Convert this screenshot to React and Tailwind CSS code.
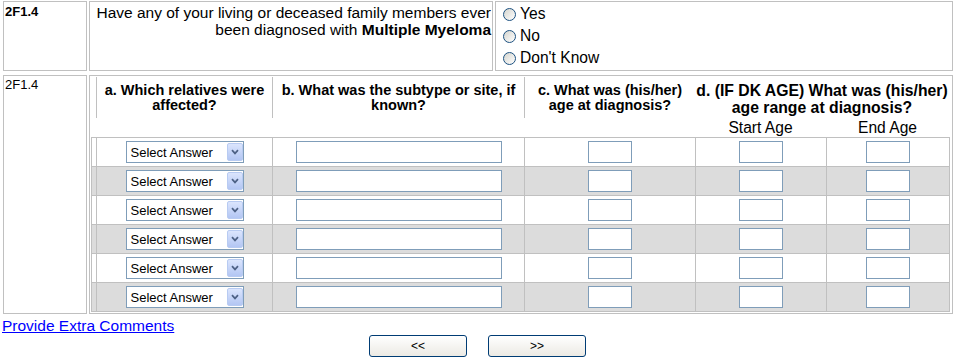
import React from "react"

const ROWS = [0, 1, 2, 3, 4, 5]

function Radio({ label }) {
  return (
    <div className="flex items-center h-[22px]">
      <span className="w-[13px] h-[13px] rounded-full border border-[#1c5180] bg-linear-to-br from-[#d4d4ce] to-white" />
      <span className="ml-[4px] text-[15.6px] leading-[18px]">{label}</span>
    </div>
  )
}

function SelectBox() {
  return (
    <div className="w-[118px] h-[22px] border border-[#7f9db9] bg-white flex items-center pl-[4px]">
      <span className="flex-1 text-[13px] leading-[15px] whitespace-nowrap">Select Answer</span>
      <span className="w-[16px] h-[18px] rounded-[2px] border border-[#b8cbf2] bg-linear-to-b from-[#dbe5fd] to-[#b3c6f3] flex items-center justify-center">
        <svg width="8" height="6" viewBox="0 0 8 6">
          <path d="M1 1.2 L4 4.4 L7 1.2" stroke="#4d6185" strokeWidth="1.7" fill="none" />
        </svg>
      </span>
    </div>
  )
}

function TextBox({ w }) {
  return <input type="text" readOnly className={`${w} h-[22px] border border-[#7f9db9] bg-white outline-none`} />
}

function DataRow({ gray, last }) {
  return (
    <div className={`flex ${last ? "h-[28px]" : "h-[29px] border-b border-[#c0c0c0]"} ${gray ? "bg-[#dcdcdc]" : "bg-white"}`}>
      <div className="w-[4px]" />
      <div className="w-[176px] border-l border-[#c0c0c0] flex items-center justify-center">
        <SelectBox />
      </div>
      <div className="w-[252px] border-l border-[#c0c0c0] flex items-center justify-center">
        <TextBox w="w-[206px]" />
      </div>
      <div className="w-[171px] border-l border-[#c0c0c0] flex items-center justify-center">
        <TextBox w="w-[44px]" />
      </div>
      <div className="w-[131px] border-l border-[#c0c0c0] flex items-center justify-center">
        <TextBox w="w-[44px]" />
      </div>
      <div className="w-[123px] border-l border-[#c0c0c0] flex items-center justify-center">
        <TextBox w="w-[44px]" />
      </div>
    </div>
  )
}

export default function App() {
  return (
    <div className="w-[959px] h-[363px] bg-white text-black font-['Liberation_Sans',Arial,sans-serif] overflow-hidden">
      <div className="pl-[3px] pt-[1px] flex flex-col">

        {/* question row */}
        <div className="flex gap-[2px] h-[70px]">
          <div className="w-[84px] border border-[#c0c0c0] pl-[1px] pt-[2px] text-[13px] leading-[15px] font-bold">2F1.4</div>
          <div className="w-[404px] border border-[#c0c0c0] pt-[2px] pr-[1px] text-right text-[15.5px] leading-[17px] whitespace-nowrap">
            Have any of your living or deceased family members ever<br />
            been diagnosed with <b>Multiple Myeloma</b>
          </div>
          <div className="w-[458px] border border-[#c0c0c0] pt-[1px] pl-[7px]">
            <Radio label="Yes" />
            <Radio label="No" />
            <Radio label="Don't Know" />
          </div>
        </div>

        {/* relatives grid row */}
        <div className="mt-[4px] flex gap-[2px] h-[239px]">
          <div className="w-[84px] border border-[#c0c0c0] pl-[1px] pt-[1px] text-[13px] leading-[15px]">2F1.4</div>
          <div className="w-[864px] border border-[#c0c0c0] flex flex-col">
            <div className="ml-[6px] mt-[1px] h-[60px] flex items-start font-bold">
              <div className="w-[176px] h-[41px] border-l border-[#c0c0c0] pt-[6px] text-center text-[14.5px] leading-[15px]">
                a. Which relatives were<br />affected?
              </div>
              <div className="w-[252px] h-[41px] border-l border-[#c0c0c0] pt-[6px] text-center text-[14.5px] leading-[15px] whitespace-nowrap">
                b. What was the subtype or site, if<br />known?
              </div>
              <div className="w-[171px] h-[41px] border-l border-[#c0c0c0] pt-[6px] text-center text-[14.5px] leading-[15px] whitespace-nowrap">
                c. What was (his/her)<br />age at diagnosis?
              </div>
              <div className="w-[254px] flex flex-col">
                <div className="pt-[5px] text-center text-[15.75px] leading-[17px] whitespace-nowrap">
                  d. (IF DK AGE) What was (his/her)<br />age range at diagnosis?
                </div>
                <div className="flex mt-[3px] text-[15.6px] leading-[18px] font-normal">
                  <div className="w-[131px] text-center">Start Age</div>
                  <div className="w-[123px] text-center">End Age</div>
                </div>
              </div>
            </div>
            <div className="ml-[1px] w-[859px] border border-[#c0c0c0]">
              {ROWS.map(i => (
                <DataRow key={i} gray={i % 2 === 1} last={i === ROWS.length - 1} />
              ))}
            </div>
          </div>
        </div>
      </div>

      <div className="mt-[3px] pl-[2px] text-[15.5px] leading-[18px]">
        <a href="#" className="text-[#0000ff] underline">Provide Extra Comments</a>
      </div>

      <div className="w-[955px] flex justify-center gap-[21px]">
        <button className="w-[98px] h-[22px] border border-[#003c74] rounded-[3px] bg-linear-to-b from-white to-[#eceae4] text-[12px] leading-[14px]">&lt;&lt;</button>
        <button className="w-[98px] h-[22px] border border-[#003c74] rounded-[3px] bg-linear-to-b from-white to-[#eceae4] text-[12px] leading-[14px]">&gt;&gt;</button>
      </div>
    </div>
  )
}
